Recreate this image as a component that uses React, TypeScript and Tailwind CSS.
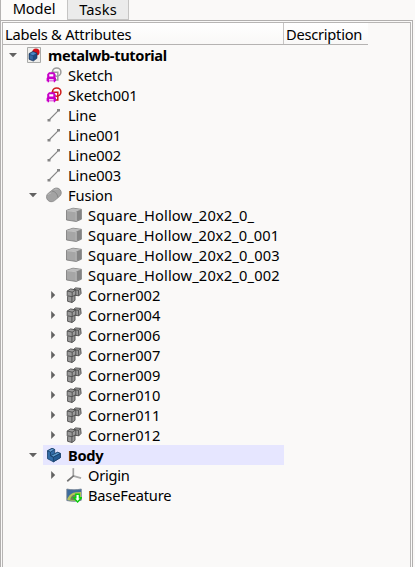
import React from "react";

type Kind = "doc" | "sketch" | "sketchRed" | "line" | "fusion" | "box" | "corner" | "body" | "origin" | "base";
type Item = { label: string; depth: number; icon: Kind; arrow?: "open" | "closed"; bold?: boolean; active?: boolean; track?: string };

const corners: Item[] = ["002", "004", "006", "007", "009", "010", "011", "012"].map((n) => ({
  label: "Corner" + n,
  depth: 2,
  icon: "corner",
  arrow: "closed",
  track: "tracking-[-0.05px]",
}));

const items: Item[] = [
  { label: "metalwb-tutorial", depth: 0, icon: "doc", arrow: "open", bold: true, track: "tracking-[-0.36px]" },
  { label: "Sketch", depth: 1, icon: "sketch" },
  { label: "Sketch001", depth: 1, icon: "sketchRed" },
  { label: "Line", depth: 1, icon: "line" },
  { label: "Line001", depth: 1, icon: "line" },
  { label: "Line002", depth: 1, icon: "line" },
  { label: "Line003", depth: 1, icon: "line" },
  { label: "Fusion", depth: 1, icon: "fusion", arrow: "open" },
  { label: "Square_Hollow_20x2_0_", depth: 2, icon: "box", track: "tracking-[0.15px]" },
  { label: "Square_Hollow_20x2_0_001", depth: 2, icon: "box", track: "tracking-[0.13px]" },
  { label: "Square_Hollow_20x2_0_003", depth: 2, icon: "box", track: "tracking-[0.15px]" },
  { label: "Square_Hollow_20x2_0_002", depth: 2, icon: "box", track: "tracking-[0.15px]" },
  ...corners,
  { label: "Body", depth: 1, icon: "body", arrow: "open", bold: true, active: true, track: "tracking-[-0.3px]" },
  { label: "Origin", depth: 2, icon: "origin", arrow: "closed", track: "tracking-[-0.25px]" },
  { label: "BaseFeature", depth: 2, icon: "base", track: "tracking-[-0.2px]" },
];

function Sketch({ color }: { color: string }) {
  return (
    <>
      <g fill="none" stroke={color} strokeWidth="1.5">
        <circle cx="10.7" cy="5.1" r="4.2" />
        <path d="M5.5 5.2H11.8V13H8" />
      </g>
      <path d="M3 5.2h5l1.5 2v3l.5 1v3H9v1H7.8v-1H3v1H1.6v-1H.6v-3l.6-1v-3z" fill="#c800c8" />
      <path d="M3.3 7.2h4v2.3h-4zM3 12.3h4.6v1.3H3z" fill="#fff" />
    </>
  );
}

function Glyph({ kind }: { kind: Kind }) {
  switch (kind) {
    case "doc":
      return (
        <>
          <path d="M1.5 .5h13v15h-13z" fill="#eeeeec" stroke="#a9aaa8" />
          <circle cx="10" cy="5" r="3.6" fill="#d40f19" />
          <path d="M3 6.6 6.8 4.4l4.2 1.6v5.3L7.3 14.1 3 12.3z" fill="#204a80" stroke="#172f50" strokeWidth=".6" />
          <path d="M3.8 7 7 5.1l3.3 1.2L7 8.2z" fill="#4b87c3" />
          <path d="M3.8 8 6.8 9v4l-3-1.3z" fill="#3768a1" />
        </>
      );
    case "sketch":
      return <Sketch color="#9b9b9b" />;
    case "sketchRed":
      return <Sketch color="#cf1b1b" />;
    case "line":
      return (
        <>
          <path d="M3 13 12.8 3.2" stroke="#858585" strokeWidth="1.1" />
          <path d="M1.5 12h3v2.6h-3zM11 2h3v2.6h-3z" fill="#858585" />
        </>
      );
    case "fusion":
      return (
        <>
          <path
            d="M7.6 2C9.6.5 12.6.7 14.2 2.8c1.7 2.2 1.3 5.1-.8 6.7l-4.8 4.1c-2.1 1.7-5.3 1.5-7-.6C-.1 10.9.2 7.9 2.3 6.2z"
            fill="#a3a3a3"
            stroke="#858585"
            strokeWidth=".8"
          />
          <path d="M6 4.2c2.9-.1 5.6 2.7 5.7 6.2" fill="none" stroke="#808080" strokeWidth=".8" />
          <path d="M2 7.8c.6-.9 1.7-1.5 2.8-1.4M8.4 2.8c1-.7 2.2-.8 3.2-.4" fill="none" stroke="#bbbbbb" />
        </>
      );
    case "box":
      return (
        <>
          <path d="M.5 3.3 7 1.2l8.4 1.1v9.9l-5.1 2.3L.5 13z" fill="#a6a6a6" stroke="#777" strokeWidth=".8" />
          <path d="M1 3.5 7 1.6l8 1-4.6 1.9z" fill="#bcbcbc" />
          <path d="M10.4 4.6 15 2.7V12l-4.6 2.1z" fill="#838383" />
          <path d="M1 3.7 10.2 4.8v9.2" fill="none" stroke="#c8c8c8" strokeWidth=".7" />
        </>
      );
    case "corner":
      return (
        <g fill="#9a9a9a" stroke="#4c4c4c" strokeWidth=".9" strokeLinejoin="round">
          <path d="m7.4 2.6 2-1.7 5.2.5.5 5-2.2 2.4-4.1-.5z" />
          <path d="m7.4 2.6 5 .7 2.2-1.9M12.4 3.3l.4 5.3" fill="none" />
          <path d="m1.2 4 3.4-2.1 5.2 1v4.7l-.8.8v4.9l-3 2.2-4.4-1.2V9.4l-.4-.8z" />
          <path d="m1.2 4 5 1.2 3.6-2.3M6.2 5.2v4.5l-4.6-.9m4.6.9 3.6-2.1M5.9 9.8v5.6" fill="none" />
        </g>
      );
    case "body":
      return (
        <g stroke="#173f68" strokeWidth=".8" strokeLinejoin="round">
          <path d="m1.5 3.8 4.5-2.4 2.7 1.1v4.2l3-1.4 2.6 1.2v4.2l-6.9 4.1-5.9-3.1z" fill="#326ca7" />
          <path d="m1.5 3.8 3 1.3 4.2-2.6L6 1.4z" fill="#6aa0d2" />
          <path d="m4.5 8.7 4.2-2 3-1.4 2.6 1.2-6.9 3.7z" fill="#5c99cb" />
          <path d="M7.4 10.2v4.6l6.9-4.1V6.5z" fill="#255b93" />
          <path d="M4.5 5.1v3.6l2.9 1.5" fill="none" />
        </g>
      );
    case "origin":
      return (
        <g fill="none" strokeLinecap="square">
          <path d="M7.3 9V2" stroke="#a0a0a0" strokeWidth="1.7" />
          <path d="m8 9.2 6.2 1.7" stroke="#a8a8a8" strokeWidth="1.8" />
          <path d="m7.2 9.2-5.3 4.5" stroke="#747474" strokeWidth="1.7" />
        </g>
      );
    case "base":
      return (
        <>
          <path d="M.8 2C5 3 11 3 15.3 2v11.2C11 14.6 5 14.6.8 13.5z" fill="#3d6c9d" stroke="#738091" strokeWidth=".8" />
          <path d="M1.2 12.8C2 8.3 7 4.8 11 5.2l4-.2v7.6C11 14.3 4 14.1 1.2 12.8z" fill="#b5c45c" />
          <path d="M4.3 12.8c0-3.3 2.8-5.4 5.5-5.4v5.8z" fill="#6c8258" />
          <path d="M9.8 7.3h3.6v3.5h2L11.6 15 7.8 10.8h2z" fill="#fff" stroke="#0bd00b" strokeWidth="1.4" />
        </>
      );
  }
}

function Row({ item }: { item: Item }) {
  const indent = item.depth === 0 ? "pl-[2px]" : item.depth === 1 ? "pl-[22px]" : "pl-[42px]";
  return (
    <div className={`flex h-5 w-[281px] shrink-0 ${indent}`}>
      <div className="mr-[2px] flex w-4 shrink-0 items-center justify-center">
        {item.arrow && (
          <svg width="12" height="12" viewBox="0 0 12 12" fill="#626262">
            {item.arrow === "open" ? <path d="M2 4h8L6 8.2z" /> : <path d="M4.2 2v8l4-4z" />}
          </svg>
        )}
      </div>
      <div className={`flex min-w-0 grow items-center pl-[3px] ${item.active ? "bg-[#e6e6ff]" : ""}`}>
        <svg width="16" height="16" viewBox="0 0 16 16" className="shrink-0">
          <Glyph kind={item.icon} />
        </svg>
        <span
          className={`ml-[6px] whitespace-nowrap leading-5 ${item.bold ? "font-bold" : ""} ${item.track ?? "tracking-[-0.12px]"}`}
        >
          {item.label}
        </span>
      </div>
    </div>
  );
}

export default function App() {
  return (
    <div className="flex h-[567px] w-[415px] flex-col overflow-hidden bg-[#faf9f8] font-['Noto_Sans',sans-serif] text-[14.67px] text-black">
      <div className="flex h-5 shrink-0">
        <div className="flex w-[67px] justify-center border-l border-[#b5b3b2] bg-[#fcfbfa] leading-4 tracking-[-0.1px]">Model</div>
        <div className="flex w-[62px] justify-center border-x border-b border-[#c5c4c3] bg-[#ebebeb] leading-[18px] tracking-[0.1px]">Tasks</div>
      </div>
      <div className="flex w-[413px] grow border-x border-t border-[#b1afae] px-px pt-px">
        <div className="flex grow flex-col border-x border-t border-[#b7b5b4]">
          <div className="flex h-[22px] w-[365px] shrink-0 border-b border-[#b5b3b2] bg-linear-to-b from-white to-[#f9f8f7]">
            <div className="w-[281px] border-r border-[#c7c5c4] pl-[2px] leading-[23px] tracking-[-0.24px]">Labels &amp; Attributes</div>
            <div className="pl-[2px] leading-[23px] tracking-[-0.25px]">Description</div>
          </div>
          <div className="flex flex-col">
            {items.map((item) => (
              <Row key={item.label} item={item} />
            ))}
          </div>
        </div>
      </div>
    </div>
  );
}
